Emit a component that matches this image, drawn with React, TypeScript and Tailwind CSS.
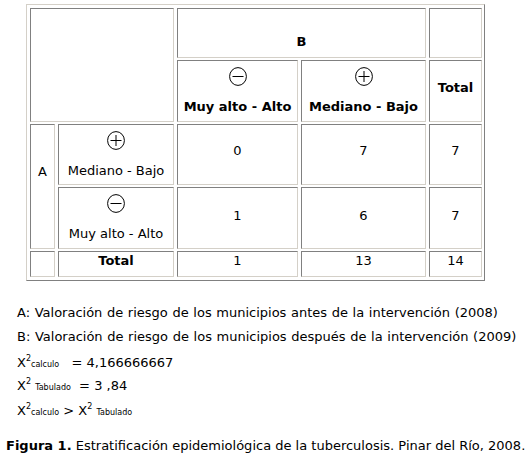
import React from 'react';

const cell =
	'border border-t-[#808080] border-l-[#808080] border-r-[#d4d0c8] border-b-[#d4d0c8] bg-white flex flex-col items-center justify-center text-center';

function Sign(props: { plus?: boolean }) {
	return (
		<svg width="18" height="19" viewBox="0 0 18 19" className="block shrink-0">
			<ellipse cx="9" cy="9.5" rx="8.4" ry="8.9" fill="none" stroke="#000" strokeWidth="1" />
			<line x1="3.5" y1="9.5" x2="14.5" y2="9.5" stroke="#000" strokeWidth="1" />
			{props.plus && <line x1="9" y1="4" x2="9" y2="15" stroke="#000" strokeWidth="1" />}
		</svg>
	);
}

function Level(props: { plus?: boolean; label: string; bold?: boolean }) {
	return (
		<div className={`${cell} gap-[13px]`}>
			<Sign plus={props.plus} />
			<span className={props.bold ? 'font-bold' : ''}>{props.label}</span>
		</div>
	);
}

function Num(props: { v: string; pb: string }) {
	return <div className={`${cell} ${props.pb}`}>{props.v}</div>;
}

export default function App() {
	return (
		<div className="min-h-screen bg-white text-black font-['DejaVu_Sans','Verdana',sans-serif] text-[13px] leading-[16px]">
			<div className="ml-[26px] pt-[4px]">
				<div className="w-fit border border-t-[#d4d0c8] border-l-[#d4d0c8] border-r-[#808080] border-b-[#808080] pt-[3px] pl-[3px] pb-[3px] pr-[2px]">
					<div className="grid grid-cols-[25px_116px_121px_125px_53px] grid-rows-[50px_62px_61px_62px_26px] gap-x-[3px] gap-y-[2px]">
						<div className={`${cell} col-span-2 row-span-2`} />
						<div className={`${cell} col-span-2 pt-[18px] font-bold`}>B</div>
						<div className={cell} />

						<Level label="Muy alto - Alto" bold />
						<Level label="Mediano - Bajo" bold plus />
						<div className={`${cell} pb-[7px] font-bold`}>Total</div>

						<div className={`${cell} row-span-2 pb-[30px]`}>A</div>
						<Level label="Mediano - Bajo" plus />
						<Num v="0" pb="pb-[7px]" />
						<Num v="7" pb="pb-[7px]" />
						<Num v="7" pb="pb-[7px]" />

						<Level label="Muy alto - Alto" />
						<Num v="1" pb="pb-[5px]" />
						<Num v="6" pb="pb-[5px]" />
						<Num v="7" pb="pb-[5px]" />

						<div className={cell} />
						<div className={`${cell} pb-[7px] font-bold`}>Total</div>
						<Num v="1" pb="pb-[7px]" />
						<Num v="13" pb="pb-[7px]" />
						<Num v="14" pb="pb-[7px]" />
					</div>
				</div>
			</div>

			<div className="pl-[17px]">
				<div className="mt-[24px] h-[16px] [word-spacing:0.5px]">A: Valoración de riesgo de los municipios antes de la intervención (2008)</div>
				<div className="mt-[8px] h-[16px] [word-spacing:0.5px]">B: Valoración de riesgo de los municipios después de la intervención (2009)</div>
				<div className="mt-[10px] h-[16px] whitespace-pre">
					X<span className="text-[8px] leading-none align-[6px]">2</span>
					<span className="text-[8px] leading-none">calculo</span>
					{'   = 4,166666667'}
				</div>
				<div className="mt-[7px] h-[16px] whitespace-pre">
					X<span className="text-[8px] leading-none align-[6px]">2</span>
					{' '}
					<span className="text-[8px] leading-none">Tabulado</span>
					{'  = 3 ,84'}
				</div>
				<div className="mt-[9px] h-[16px] whitespace-pre">
					X<span className="text-[8px] leading-none align-[6px]">2</span>
					<span className="text-[8px] leading-none">calculo</span>
					{' > X'}
					<span className="text-[8px] leading-none align-[6px]">2</span>
					{' '}
					<span className="text-[8px] leading-none">Tabulado</span>
				</div>
			</div>
			<div className="pl-[6px] mt-[19px] h-[16px] whitespace-nowrap">
				<span className="font-bold">Figura 1.</span> Estratificación epidemiológica de la tuberculosis. Pinar del Río, 2008.
			</div>
		</div>
	);
}
